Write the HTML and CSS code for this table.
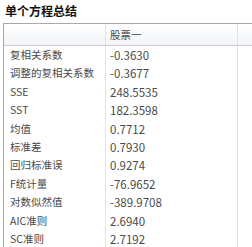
FILE: index.html
```html
<!DOCTYPE html>
<html>
<head>
<meta charset="utf-8">
<link rel="stylesheet" href="styles.css">
</head>
<body>
<div class="title">单个方程总结</div>
<div class="grid">
  <div class="hrow">
    <div class="c1"></div>
    <div class="c2">股票一</div>
    <div class="c3"></div>
  </div>
  <div class="row"><div class="c1">复相关系数</div><div class="c2">-0.3630</div><div class="c3"></div></div>
  <div class="row"><div class="c1">调整的复相关系数</div><div class="c2">-0.3677</div><div class="c3"></div></div>
  <div class="row"><div class="c1">SSE</div><div class="c2">248.5535</div><div class="c3"></div></div>
  <div class="row"><div class="c1">SST</div><div class="c2">182.3598</div><div class="c3"></div></div>
  <div class="row"><div class="c1">均值</div><div class="c2">0.7712</div><div class="c3"></div></div>
  <div class="row"><div class="c1">标准差</div><div class="c2">0.7930</div><div class="c3"></div></div>
  <div class="row"><div class="c1">回归标准误</div><div class="c2">0.9274</div><div class="c3"></div></div>
  <div class="row"><div class="c1">F统计量</div><div class="c2">-76.9652</div><div class="c3"></div></div>
  <div class="row"><div class="c1">对数似然值</div><div class="c2">-389.9708</div><div class="c3"></div></div>
  <div class="row"><div class="c1">AIC准则</div><div class="c2">2.6940</div><div class="c3"></div></div>
  <div class="row"><div class="c1">SC准则</div><div class="c2">2.7192</div><div class="c3"></div></div>
</div>
</body>
</html>
```

FILE: styles.css
```css
html, body {
  margin: 0;
  padding: 0;
  background: #ffffff;
  overflow: hidden;
  width: 252px;
  height: 247px;
}
body {
  font-family: "Noto Sans CJK SC", "Noto Sans", sans-serif;
  color: #4a4a4a;
}
.title {
  height: 23px;
  line-height: 22px;
  padding-left: 5px;
  font-size: 12px;
  font-weight: bold;
  color: #111;
  box-sizing: border-box;
}
.grid {
  margin-left: 3px;
  width: 249px;
  border-top: 1px solid #a9a9a9;
  border-left: 1px solid #a9a9a9;
  box-sizing: border-box;
  overflow: hidden;
}
.hrow, .row {
  display: grid;
  grid-template-columns: 102px 132px 1fr;
}
.hrow {
  height: 21px;
  background: linear-gradient(#ffffff, #f1f3f6);
  border-bottom: 1px solid #c8ccd2;
  line-height: 21px;
}
.row {
  height: 18.4px;
  line-height: 18.4px;
}
.c1 {
  padding-left: 6px;
  font-size: 10.5px;
  border-right: 1px solid #e4e4e4;
  white-space: nowrap;
  overflow: hidden;
}
.c2 {
  padding-left: 4px;
  font-size: 11.5px;
  border-right: 1px solid #e4e4e4;
  white-space: nowrap;
}
.hrow .c2 {
  font-size: 10.5px;
}
.hrow .c1, .hrow .c2 {
  border-right-color: #dfe2e6;
}
```
